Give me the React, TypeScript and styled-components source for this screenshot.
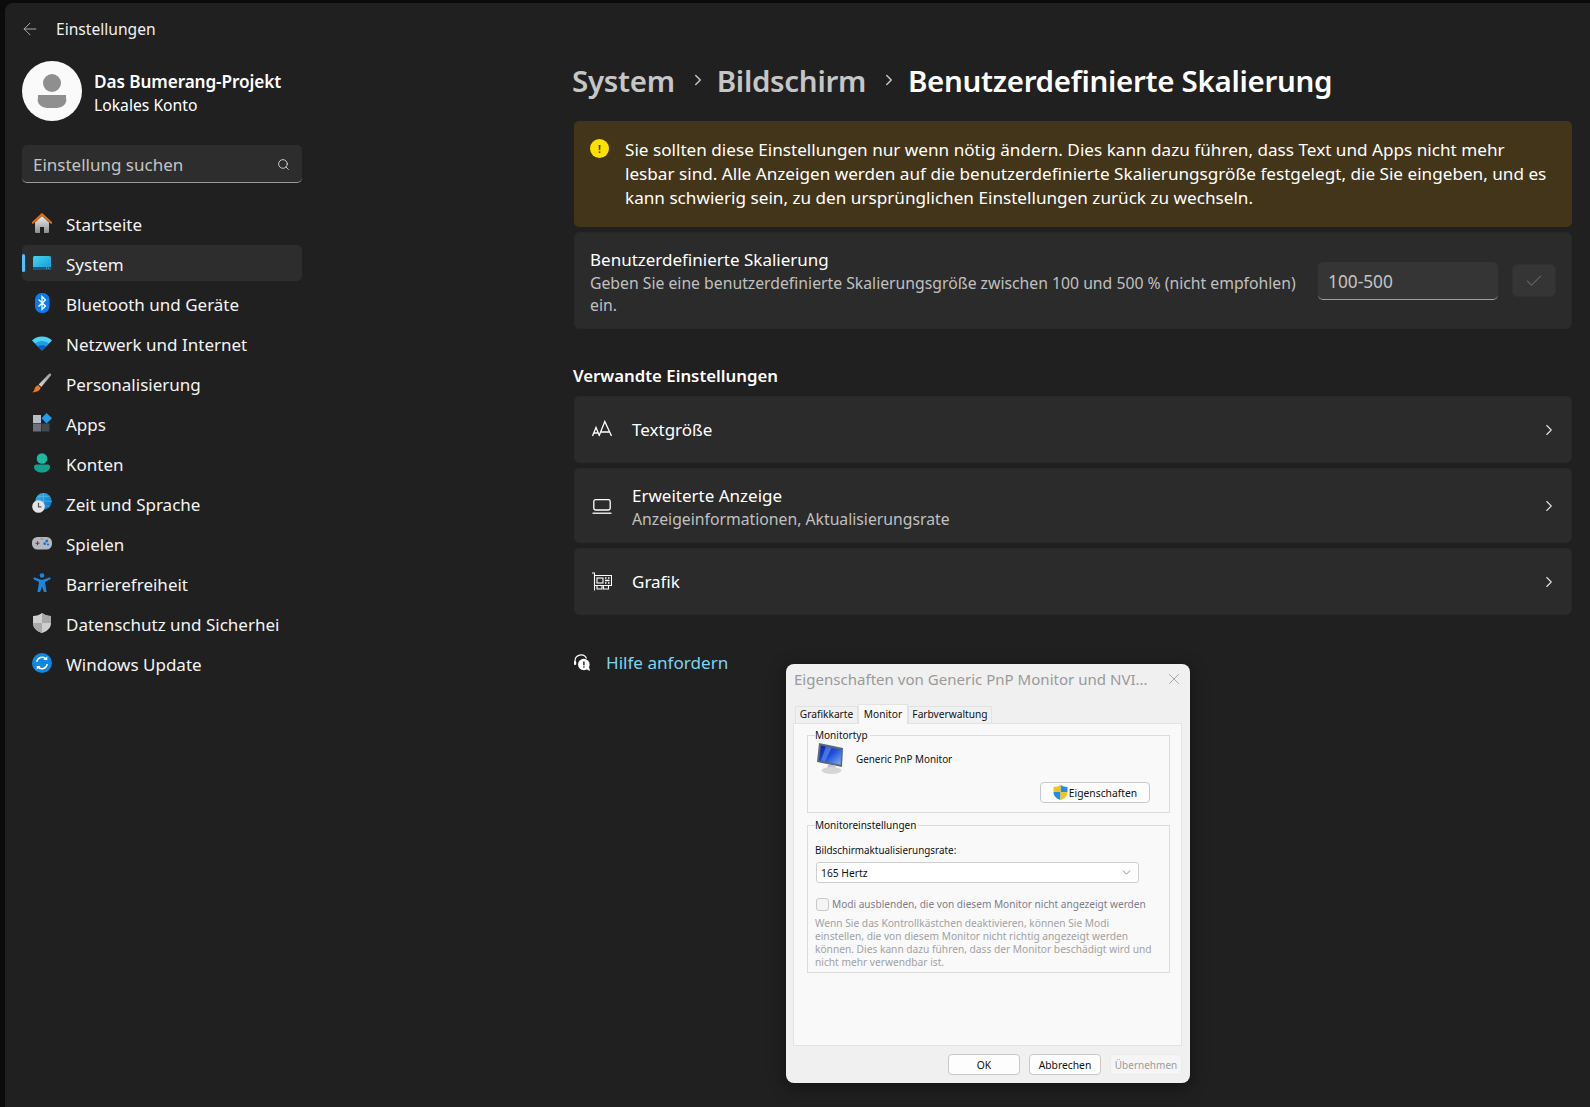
import React from "react";
import styled, { createGlobalStyle } from "styled-components";
import { ArrowLeft, Check, ChevronDown, ChevronRight, Search, X } from "lucide-react";

const GlobalStyle = createGlobalStyle`
  html, body {
    margin: 0;
    width: 1590px;
    height: 1107px;
    overflow: hidden;
    background: #0b0b0b;
    font-family: "Noto Sans", "Open Sans", sans-serif;
  }
`;

const Win = styled.div`
  position: relative;
  display: flex;
  width: 1585px;
  height: 1104px;
  margin: 3px 0 0 5px;
  background: #202020;
  border-top-left-radius: 8px;
  color: #fff;
`;

const Sidebar = styled.aside`
  flex: none;
  width: 297px;
  padding-left: 17px;
  box-sizing: border-box;
`;

const TitleRow = styled.div`
  display: flex;
  align-items: center;
  height: 52px;
  margin-left: -2px;
  color: #f0f0f0;
  font-size: 15.6px;
  gap: 16px;
  svg { color: #c4c4c4; }
`;

const Profile = styled.div`
  display: flex;
  align-items: center;
  gap: 12px;
  margin-top: 6px;
`;

const Avatar = styled.div`
  flex: none;
  width: 60px;
  height: 60px;
  svg { display: block; }
`;

const ProfileText = styled.div`
  padding-top: 4px;
`;

const ProfileName = styled.div`
  font-size: 17.2px;
  font-weight: 600;
  line-height: 24px;
  letter-spacing: -0.1px;
`;

const ProfileKind = styled.div`
  font-size: 15.7px;
  line-height: 22px;
`;

const SearchBox = styled.div`
  display: flex;
  align-items: center;
  justify-content: space-between;
  box-sizing: border-box;
  width: 280px;
  height: 38px;
  margin-top: 24px;
  padding: 1px 12px 0 11px;
  background: #2d2d2d;
  border-radius: 5px;
  border-bottom: 1px solid #9a9a9a;
  color: #c4c4c4;
  font-size: 17px;
  svg { color: #ddd; }
`;

const Nav = styled.nav`
  display: flex;
  flex-direction: column;
  gap: 4px;
  width: 280px;
  margin-top: 22px;
`;

const NavItem = styled.div<{ $active?: boolean }>`
  position: relative;
  display: flex;
  align-items: center;
  gap: 14px;
  height: 36px;
  padding-left: 10px;
  border-radius: 5px;
  font-size: 17px;
  color: #f4f4f4;
  background: ${(p) => (p.$active ? "#2d2d2d" : "transparent")};
  white-space: nowrap;
  ${(p) =>
    p.$active &&
    `&::before {
      content: "";
      position: absolute;
      left: 0;
      top: 9px;
      width: 3px;
      height: 18px;
      border-radius: 2px;
      background: #4cc2ff;
    }`}
`;

const NavIcon = styled.span`
  flex: none;
  width: 20px;
  height: 20px;
  svg { display: block; width: 20px; height: 20px; }
`;

const NavLabel = styled.span`
  padding-top: 3px;
`;

const Main = styled.main`
  flex: none;
  width: 998px;
  margin-left: 272px;
`;

const Crumbs = styled.h1`
  display: flex;
  align-items: center;
  height: 56px;
  margin: 49px 0 13px -2px;
  font-size: 29.5px;
  font-weight: 600;
  letter-spacing: -0.3px;
  white-space: nowrap;
`;

const Crumb = styled.span<{ $current?: boolean }>`
  color: ${(p) => (p.$current ? "#fff" : "#c6c6c6")};
`;

const CrumbSep = styled.span`
  display: flex;
  box-sizing: border-box;
  width: 42px;
  padding-left: 4px;
  justify-content: center;
  color: #c6c6c6;
`;

const Warning = styled.section`
  display: flex;
  box-sizing: border-box;
  height: 106px;
  padding: 18px 16px 0;
  gap: 16px;
  background: #433519;
  border-radius: 5px;
  font-size: 17.15px;
  line-height: 24px;
  white-space: nowrap;
`;

const WarnText = styled.div`
  margin-top: -1px;
`;

const WarnDot = styled.span`
  flex: none;
  display: flex;
  align-items: center;
  justify-content: center;
  width: 19px;
  height: 19px;
  border-radius: 50%;
  background: #fce100;
  color: #433519;
  font-size: 10px;
  font-weight: 700;
  line-height: 1;
`;

const Card = styled.div<{ $height: number }>`
  display: flex;
  align-items: center;
  box-sizing: border-box;
  height: ${(p) => p.$height}px;
  padding: 0 15px 0 17px;
  background: #2b2b2b;
  border: 1px solid #282828;
  border-radius: 5px;
`;

const ScaleCard = styled(Card)`
  margin-top: 5px;
  padding-left: 15px;
`;

const CardText = styled.div`
  flex: 1;
  min-width: 0;
`;

const CardTitle = styled.div`
  font-size: 17px;
  line-height: 24px;
`;

const CardSub = styled.div`
  margin-bottom: -3px;
  font-size: 15.75px;
  line-height: 22px;
  color: #c0c0c0;
`;

const ScaleInput = styled.div`
  flex: none;
  box-sizing: border-box;
  width: 180px;
  height: 38px;
  padding: 2px 10px 0;
  display: flex;
  align-items: center;
  background: #353535;
  border-radius: 5px;
  border-bottom: 1px solid #a0a0a0;
  color: #c4c4c4;
  font-size: 17.3px;
`;

const ApplyButton = styled.div`
  flex: none;
  display: flex;
  align-items: center;
  justify-content: center;
  width: 44px;
  height: 33px;
  margin-left: 14px;
  background: #353535;
  border: 1px solid #303030;
  box-sizing: border-box;
  border-radius: 5px;
  color: #808080;
`;

const SectionTitle = styled.h2`
  margin: 36px 0 9px -1px;
  font-size: 16.8px;
  font-weight: 600;
  line-height: 22px;
`;

const LinkList = styled.div`
  display: flex;
  flex-direction: column;
  gap: 5px;
`;

const LinkIcon = styled.span`
  flex: none;
  width: 20px;
  height: 20px;
  margin-right: 20px;
  svg { display: block; width: 20px; height: 20px; }
`;

const LinkChevron = styled(ChevronRight)`
  flex: none;
  margin-right: -2px;
  color: #e0e0e0;
`;

const Help = styled.div`
  display: flex;
  align-items: center;
  gap: 16px;
  margin-top: 35px;
  height: 24px;
  font-size: 17.1px;
  color: #7ed3ef;
  svg { display: block; width: 16px; height: 17px; }
`;

/* classic dialog sitting on top of the settings window */
const Dialog = styled.div`
  position: absolute;
  left: 781px;
  top: 661px;
  width: 404px;
  height: 419px;
  box-sizing: border-box;
  display: flex;
  flex-direction: column;
  background: #f0f0f0;
  border-radius: 8px;
  box-shadow: 0 4px 18px rgba(0, 0, 0, 0.45);
  color: #111;
  font-size: 9.9px;
`;

const DialogTitle = styled.div`
  display: flex;
  align-items: center;
  justify-content: space-between;
  height: 30px;
  padding: 0 7px 0 8px;
  color: #9a9a9a;
  font-size: 15.05px;
  white-space: nowrap;
  svg { color: #999; }
`;

const Tabs = styled.div`
  display: flex;
  align-items: flex-end;
  height: 29px;
  padding-left: 9px;
  font-size: 10.2px;
`;

const Tab = styled.div<{ $active?: boolean; $width: number }>`
  display: flex;
  align-items: center;
  justify-content: center;
  box-sizing: border-box;
  width: ${(p) => p.$width}px;
  height: ${(p) => (p.$active ? 20 : 17)}px;
  margin-bottom: ${(p) => (p.$active ? -1 : 0)}px;
  padding-bottom: 2px;
  background: ${(p) => (p.$active ? "#f9f9f9" : "#f0f0f0")};
  border: 1px solid #e2e2e2;
  border-bottom: none;
  position: relative;
  z-index: ${(p) => (p.$active ? 1 : 0)};
  white-space: nowrap;
`;

const Panel = styled.div`
  box-sizing: border-box;
  width: 389px;
  height: 323px;
  margin-left: 7px;
  padding: 4px 11px 0 13px;
  background: #f9f9f9;
  border: 1px solid #e3e3e3;
`;

const Group = styled.fieldset<{ $height: number }>`
  box-sizing: border-box;
  height: ${(p) => p.$height}px;
  margin: 0 0 5px;
  padding: 0 7px;
  min-width: 0;
  border: 1px solid #dcdcdc;
  legend {
    padding: 0 2px 0 0;
    line-height: 14px;
    font-size: 10px;
  }
`;

const MonitorRow = styled.div`
  display: flex;
  align-items: center;
  gap: 10px;
  margin-top: 1px;
  padding-left: 1px;
  svg { display: block; width: 30px; height: 31px; }
`;

const RowEnd = styled.div`
  display: flex;
  justify-content: flex-end;
  padding-right: 12px;
  margin-top: 8px;
`;

const DlgButton = styled.div<{ $disabled?: boolean; $width: number }>`
  display: flex;
  align-items: center;
  justify-content: center;
  gap: 1px;
  box-sizing: border-box;
  width: ${(p) => p.$width}px;
  height: 21px;
  background: ${(p) => (p.$disabled ? "#f5f5f5" : "#fdfdfd")};
  border: 1px solid ${(p) => (p.$disabled ? "#ececec" : "#c8c8c8")};
  border-radius: 4px;
  color: ${(p) => (p.$disabled ? "#9c9c9c" : "#111")};
  font-size: ${(p) => (p.$disabled ? 10 : 10.3)}px;
  svg { display: block; width: 15px; height: 15px; }
`;

const FieldLabel = styled.div`
  margin-top: 11px;
  line-height: 14px;
`;

const Select = styled.div`
  display: flex;
  align-items: center;
  justify-content: space-between;
  box-sizing: border-box;
  width: 323px;
  height: 21px;
  margin: 5px 0 0 1px;
  padding: 0 5px 0 4px;
  background: #fff;
  border: 1px solid #cfcfcf;
  border-radius: 3px;
  font-size: 10.3px;
  svg { color: #555; }
`;

const CheckRow = styled.div`
  display: flex;
  align-items: center;
  gap: 3px;
  margin: 14px 0 0 1px;
  color: #7d7d8c;
  font-size: 10.1px;
  white-space: nowrap;
`;

const CheckBox = styled.span`
  flex: none;
  width: 13px;
  height: 13px;
  box-sizing: border-box;
  background: #f4f4f4;
  border: 1px solid #c9c9c9;
  border-radius: 3px;
`;

const Hint = styled.div`
  margin-top: 6px;
  line-height: 13px;
  color: #a2a2a2;
  font-size: 10.2px;
  white-space: nowrap;
`;

const Footer = styled.div`
  display: flex;
  justify-content: flex-end;
  gap: 9px;
  padding: 8px 8px 0 0;
`;

const HomeIcon = () => (
  <svg viewBox="0 0 20 20">
    <defs>
      <linearGradient id="hg" x1="0" y1="0" x2="0" y2="1">
        <stop offset="0" stopColor="#f0f0f0" />
        <stop offset="1" stopColor="#8c8c8c" />
      </linearGradient>
    </defs>
    <path d="M3 9.500 10 3l7 6.500V19a1 1 0 0 1-1 1h-4v-6H8v6H4a1 1 0 0 1-1-1Z" fill="url(#hg)" />
    <path d="M.8 9.800 10 1.200l9.200 8.600" fill="none" stroke="#e8700f" strokeWidth="2" strokeLinecap="round" />
  </svg>
);

const SystemIcon = () => (
  <svg viewBox="0 0 20 20">
    <defs>
      <linearGradient id="sg" x1="0" y1="0" x2="1" y2="1">
        <stop offset="0" stopColor="#46d3ee" />
        <stop offset="1" stopColor="#149ad6" />
      </linearGradient>
    </defs>
    <rect x="1" y="3" width="18" height="14" rx="1.500" fill="url(#sg)" />
    <path d="M1 14h18v1.500a1.500 1.500 0 0 1-1.500 1.500h-15A1.500 1.500 0 0 1 1 15.500Z" fill="#15597f" />
    <path d="M14 15.200h1M16 15.200h1" stroke="#9fd8ee" strokeWidth="0.8" />
  </svg>
);

const BluetoothIcon = () => (
  <svg viewBox="0 0 20 20">
    <rect x="3" y="0" width="14.500" height="20" rx="6.500" fill="#0a7cf0" />
    <path d="M6.500 6.500 13.500 13 10 16.500v-13L13.500 7 6.500 13.500" fill="none" stroke="#fff" strokeWidth="1.300" />
  </svg>
);

const WifiIcon = () => (
  <svg viewBox="0 0 20 20">
    <path d="M0 7.500C2.500 5 6 3.500 10 3.500s7.500 1.500 10 4L10 17.500Z" fill="#4cd2f2" />
    <path d="M3 10.500C5 9 7.300 8 10 8s5 1 7 2.500L10 17.500Z" fill="#1f9ce4" />
    <path d="M6 13.500C7 12.800 8.400 12.300 10 12.300s3 .5 4 1.200l-4 4Z" fill="#0a5fc0" />
  </svg>
);

const BrushIcon = () => (
  <svg viewBox="0 0 20 20">
    <defs>
      <linearGradient id="bg" x1="1" y1="0" x2="0" y2="1">
        <stop offset="0" stopColor="#9a9a9a" />
        <stop offset="1" stopColor="#d8d8d8" />
      </linearGradient>
    </defs>
    <path d="M18.400 .6c.8.5 1 1.300.5 2L9.300 14 6.600 11.600 16.800 1c.5-.5 1.100-.7 1.600-.4Z" fill="url(#bg)" />
    <path d="M6 12.200 8.600 14.600C8 17.500 5 19.500 .3 19.300 2.500 18 2.300 16.500 3 14.800 3.500 13.500 4.700 12.500 6 12.200Z" fill="#ec7a1c" />
  </svg>
);

const AppsIcon = () => (
  <svg viewBox="0 0 20 20">
    <rect x="1" y="2" width="8" height="8" fill="#b8bcc4" />
    <rect x="1" y="10.500" width="8" height="8" fill="#6d7078" />
    <rect x="9.500" y="10.500" width="8" height="8" fill="#44474e" />
    <path d="M14.500 0 20 5.200 14.500 10.400 9.500 5.200Z" fill="#1d9ff0" />
  </svg>
);

const AccountIcon = () => (
  <svg viewBox="0 0 20 20">
    <circle cx="10" cy="5.500" r="5.300" fill="#21b8a2" />
    <path d="M2 14a2.500 2.500 0 0 1 2.500-2.500h11A2.500 2.500 0 0 1 18 14c0 3.500-4 5.500-8 5.500s-8-2-8-5.500Z" fill="#15a08c" />
  </svg>
);

const TimeIcon = () => (
  <svg viewBox="0 0 20 20">
    <defs>
      <linearGradient id="tg" x1="0" y1="0" x2="1" y2="1">
        <stop offset="0" stopColor="#34b8e8" />
        <stop offset="1" stopColor="#0a6cc4" />
      </linearGradient>
    </defs>
    <circle cx="11.500" cy="8.300" r="8.300" fill="url(#tg)" />
    <path d="M11.500 0v16.600M3.200 8.300h16.600M5.500 3.500h12M5.500 13h12" stroke="#6fd0f2" strokeWidth="0.6" opacity="0.7" />
    <circle cx="6.500" cy="13.500" r="6.300" fill="#e4e4e4" />
    <path d="M6.500 9.800v4h3" fill="none" stroke="#555" strokeWidth="1.200" />
  </svg>
);

const GameIcon = () => (
  <svg viewBox="0 0 20 20">
    <rect x="0" y="4" width="20" height="12.500" rx="5.500" fill="#b5b7bc" />
    <path d="M3.500 10.300h4M5.500 8.300v4" stroke="#4c4c50" strokeWidth="1.100" />
    <circle cx="14.800" cy="8" r="1.400" fill="#1273d8" />
    <circle cx="12.800" cy="10.700" r="1.400" fill="#1273d8" />
    <circle cx="16" cy="11.500" r="1.100" fill="#1273d8" />
    <path d="M8.500 5.800h3" stroke="#7a7a80" strokeWidth="0.800" />
  </svg>
);

const AccessIcon = () => (
  <svg viewBox="0 0 20 20">
    <circle cx="10" cy="2.500" r="2.300" fill="#1a86dc" />
    <path d="M2 4.300 9 6.800h2l7-2.500.8 1.700L13 9l1.500 10h-2.600L10 13.200 8.100 19H5.500L7 9 1.200 6Z" fill="#1a86dc" />
  </svg>
);

const ShieldIcon = () => (
  <svg viewBox="0 0 20 20">
    <path d="M10 0c2.500 2 5.500 3 9 3v7c0 5-4 8.500-9 10-5-1.500-9-5-9-10V3c3.500 0 6.500-1 9-3Z" fill="#cfcfcf" />
    <path d="M10 0c2.500 2 5.500 3 9 3v7H10ZM10 10H1c0 5 4 8.500 9 10Z" fill="#a8a8a8" />
  </svg>
);

const UpdateIcon = () => (
  <svg viewBox="0 0 20 20">
    <circle cx="10" cy="10" r="10" fill="#1187e4" />
    <path d="M4.800 9a5.300 5.300 0 0 1 9.400-2.800M15.200 11a5.300 5.300 0 0 1-9.400 2.800" fill="none" stroke="#fff" strokeWidth="1.500" />
    <path d="M15.300 3.200v3.900h-3.900ZM4.700 16.800v-3.900h3.900Z" fill="#fff" />
  </svg>
);

const TextSizeIcon = () => (
  <svg viewBox="0 0 20 20" fill="none" stroke="#fff" strokeWidth="1.300">
    <path d="M.5 16 4 7.500 7.500 16M1.700 13h4.600M7 16 12.800 1.500 19.500 16M9 12h8" />
  </svg>
);

const LaptopIcon = () => (
  <svg viewBox="0 0 20 20" fill="none" stroke="#fff" strokeWidth="1.300">
    <rect x="1.800" y="3.600" width="16.400" height="10.400" rx="1.800" />
    <path d="M0.500 17.200h19" />
  </svg>
);

const GraphicsIcon = () => (
  <svg viewBox="0 0 20 20" fill="none" stroke="#fff" strokeWidth="1.100">
    <path d="M0 1h2.500v17.500M2.500 3.500h17v10h-17M5 13.500v3.500h5v-3.500M11.500 13.500v3.500h5v-3.500" />
    <rect x="5" y="6" width="6" height="5" />
    <path d="M13 6h1.500M16 6h1.500M13 8.500h4.500M13 11h1.500M16 11h1.500" strokeWidth="1.500" />
  </svg>
);

const HelpIcon = () => (
  <svg viewBox="0 0 16 17">
    <path d="M1 9V7a6 6 0 0 1 11.500-2.400" fill="none" stroke="#fff" strokeWidth="1.200" />
    <rect x="0" y="7" width="2.200" height="4" rx="1" fill="#fff" />
    <circle cx="9.800" cy="10.500" r="5.800" fill="#fff" />
    <path d="M12 15 16 17 15 13Z" fill="#fff" />
    <rect x="9.200" y="7.500" width="1.400" height="3.800" fill="#202020" />
    <rect x="9.200" y="12.300" width="1.400" height="1.400" fill="#202020" />
  </svg>
);

const MonitorIcon = () => (
  <svg viewBox="0 0 30 31">
    <defs>
      <linearGradient id="mg" x1="0" y1="0" x2="1" y2="1">
        <stop offset="0" stopColor="#0a1fa0" />
        <stop offset="0.5" stopColor="#1d4fd8" />
        <stop offset="1" stopColor="#8ab0f0" />
      </linearGradient>
    </defs>
    <path d="M3 0 27 5 26 24 1 19Z" fill="#5a6a78" />
    <path d="M5 2.500 25.500 7 24.500 21.500 3 17.500Z" fill="url(#mg)" />
    <path d="M10 3.500 15.500 5 9 18.500 5 17.500Z" fill="#5f86e8" opacity="0.7" />
    <path d="M12 22h7l1 4h-9Z" fill="#c0c4c8" />
    <ellipse cx="15.500" cy="27.500" rx="10" ry="3.500" fill="#d4d6d8" />
  </svg>
);

const UacIcon = () => (
  <svg viewBox="0 0 15 15">
    <path d="M7.500 0C9.500 1.300 12 2 14.500 2v5h-7Z" fill="#1f8fe0" />
    <path d="M7.500 0C5.500 1.300 3 2 .5 2v5h7Z" fill="#f7c21c" />
    <path d="M.5 7h7v8C4 13.800 .5 11.500 .5 7Z" fill="#1f8fe0" />
    <path d="M14.500 7h-7v8c3.500-1.200 7-3.500 7-8Z" fill="#f7c21c" />
  </svg>
);

const navItems: { label: string; icon: React.ReactNode; active?: boolean }[] = [
  { label: "Startseite", icon: <HomeIcon /> },
  { label: "System", icon: <SystemIcon />, active: true },
  { label: "Bluetooth und Geräte", icon: <BluetoothIcon /> },
  { label: "Netzwerk und Internet", icon: <WifiIcon /> },
  { label: "Personalisierung", icon: <BrushIcon /> },
  { label: "Apps", icon: <AppsIcon /> },
  { label: "Konten", icon: <AccountIcon /> },
  { label: "Zeit und Sprache", icon: <TimeIcon /> },
  { label: "Spielen", icon: <GameIcon /> },
  { label: "Barrierefreiheit", icon: <AccessIcon /> },
  { label: "Datenschutz und Sicherhei", icon: <ShieldIcon /> },
  { label: "Windows Update", icon: <UpdateIcon /> },
];

export default function App() {
  return (
    <>
      <GlobalStyle />
      <Win>
        <Sidebar>
          <TitleRow>
            <ArrowLeft size={20} strokeWidth={1} />
            <span>Einstellungen</span>
          </TitleRow>
          <Profile>
            <Avatar>
              <svg viewBox="0 0 60 60" width="60" height="60">
                <circle cx="30" cy="30" r="30" fill="#fafafa" />
                <circle cx="30" cy="22" r="9" fill="#8f8f8f" />
                <path d="M16 34h28v3a10 8 0 0 1-10 10h-8a10 8 0 0 1-10-10Z" fill="#8f8f8f" />
              </svg>
            </Avatar>
            <ProfileText>
              <ProfileName>Das Bumerang-Projekt</ProfileName>
              <ProfileKind>Lokales Konto</ProfileKind>
            </ProfileText>
          </Profile>
          <SearchBox>
            <span>Einstellung suchen</span>
            <Search size={13} strokeWidth={1.6} />
          </SearchBox>
          <Nav>
            {navItems.map((item) => (
              <NavItem key={item.label} $active={item.active}>
                <NavIcon>{item.icon}</NavIcon>
                <NavLabel>{item.label}</NavLabel>
              </NavItem>
            ))}
          </Nav>
        </Sidebar>

        <Main>
          <Crumbs>
            <Crumb>System</Crumb>
            <CrumbSep><ChevronRight size={18} strokeWidth={2} /></CrumbSep>
            <Crumb>Bildschirm</Crumb>
            <CrumbSep><ChevronRight size={18} strokeWidth={2} /></CrumbSep>
            <Crumb $current>Benutzerdefinierte Skalierung</Crumb>
          </Crumbs>

          <Warning>
            <WarnDot>!</WarnDot>
            <WarnText>
              Sie sollten diese Einstellungen nur wenn nötig ändern. Dies kann dazu führen, dass Text und Apps nicht mehr
              <br />
              lesbar sind. Alle Anzeigen werden auf die benutzerdefinierte Skalierungsgröße festgelegt, die Sie eingeben, und es
              <br />
              kann schwierig sein, zu den ursprünglichen Einstellungen zurück zu wechseln.
            </WarnText>
          </Warning>

          <ScaleCard $height={97}>
            <CardText>
              <CardTitle>Benutzerdefinierte Skalierung</CardTitle>
              <CardSub>
                Geben Sie eine benutzerdefinierte Skalierungsgröße zwischen 100 und 500 % (nicht empfohlen)
                <br />
                ein.
              </CardSub>
            </CardText>
            <ScaleInput>100-500</ScaleInput>
            <ApplyButton><Check size={20} strokeWidth={1.1} /></ApplyButton>
          </ScaleCard>

          <SectionTitle>Verwandte Einstellungen</SectionTitle>
          <LinkList>
            <Card $height={67}>
              <LinkIcon><TextSizeIcon /></LinkIcon>
              <CardText><CardTitle>Textgröße</CardTitle></CardText>
              <LinkChevron size={18} strokeWidth={1.5} />
            </Card>
            <Card $height={75}>
              <LinkIcon><LaptopIcon /></LinkIcon>
              <CardText>
                <CardTitle>Erweiterte Anzeige</CardTitle>
                <CardSub>Anzeigeinformationen, Aktualisierungsrate</CardSub>
              </CardText>
              <LinkChevron size={18} strokeWidth={1.5} />
            </Card>
            <Card $height={67}>
              <LinkIcon><GraphicsIcon /></LinkIcon>
              <CardText><CardTitle>Grafik</CardTitle></CardText>
              <LinkChevron size={18} strokeWidth={1.5} />
            </Card>
          </LinkList>

          <Help>
            <HelpIcon />
            <span>Hilfe anfordern</span>
          </Help>
        </Main>

        <Dialog>
          <DialogTitle>
            <span>Eigenschaften von Generic PnP Monitor und NVI...</span>
            <X size={18} strokeWidth={1.1} />
          </DialogTitle>
          <Tabs>
            <Tab $width={63}>Grafikkarte</Tab>
            <Tab $active $width={50}>Monitor</Tab>
            <Tab $width={84}>Farbverwaltung</Tab>
          </Tabs>
          <Panel>
            <Group $height={85}>
              <legend>Monitortyp</legend>
              <MonitorRow>
                <MonitorIcon />
                <span>Generic PnP Monitor</span>
              </MonitorRow>
              <RowEnd>
                <DlgButton $width={110}>
                  <UacIcon />
                  Eigenschaften
                </DlgButton>
              </RowEnd>
            </Group>
            <Group $height={155}>
              <legend>Monitoreinstellungen</legend>
              <FieldLabel>Bildschirmaktualisierungsrate:</FieldLabel>
              <Select>
                <span>165 Hertz</span>
                <ChevronDown size={13} strokeWidth={1.2} />
              </Select>
              <CheckRow>
                <CheckBox />
                Modi ausblenden, die von diesem Monitor nicht angezeigt werden
              </CheckRow>
              <Hint>
                Wenn Sie das Kontrollkästchen deaktivieren, können Sie Modi
                <br />
                einstellen, die von diesem Monitor nicht richtig angezeigt werden
                <br />
                können. Dies kann dazu führen, dass der Monitor beschädigt wird und
                <br />
                nicht mehr verwendbar ist.
              </Hint>
            </Group>
          </Panel>
          <Footer>
            <DlgButton $width={72}>OK</DlgButton>
            <DlgButton $width={72}>Abbrechen</DlgButton>
            <DlgButton $width={72} $disabled>Übernehmen</DlgButton>
          </Footer>
        </Dialog>
      </Win>
    </>
  );
}
